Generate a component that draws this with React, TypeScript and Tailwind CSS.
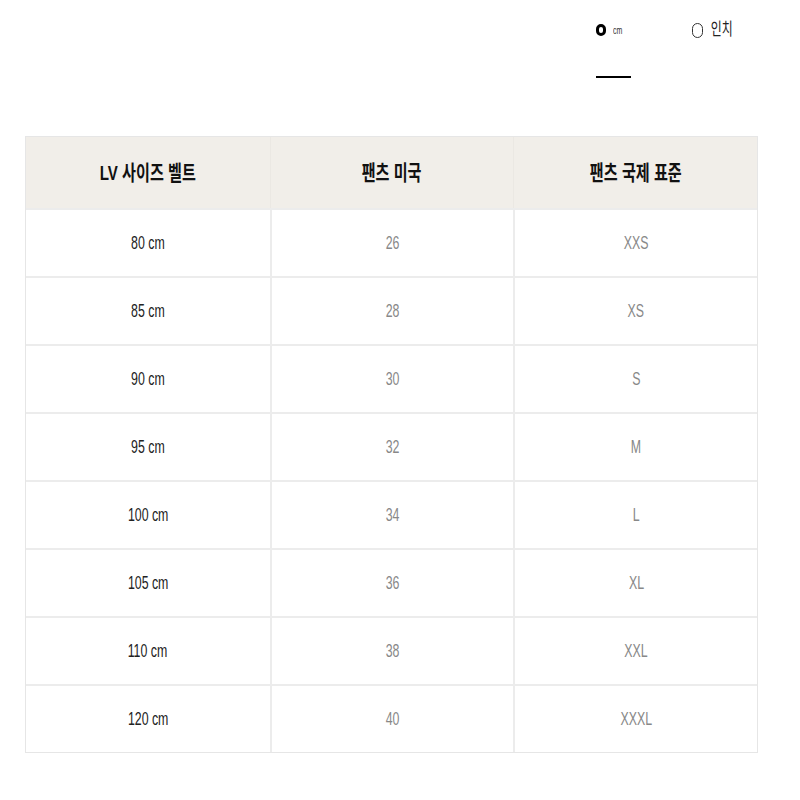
import React from 'react';

const rows = [
  ['80 cm', '26', 'XXS'],
  ['85 cm', '28', 'XS'],
  ['90 cm', '30', 'S'],
  ['95 cm', '32', 'M'],
  ['100 cm', '34', 'L'],
  ['105 cm', '36', 'XL'],
  ['110 cm', '38', 'XXL'],
  ['120 cm', '40', 'XXXL'],
];

const font = { fontFamily: '"Liberation Sans", "Noto Sans CJK KR", sans-serif' };

const Narrow: React.FC<{ children: React.ReactNode; className?: string }> = ({ children, className = '' }) => (
  <span className={`inline-block whitespace-nowrap ${className}`}>{children}</span>
);

export default function App() {
  return (
    <div className="w-[800px] h-[800px] bg-white" style={font}>
      <div className="flex pl-[596px] pt-[20px]">
        <div className="flex flex-col w-[96px]">
          <div className="flex items-center gap-[6px] h-[20px]">
            <span className="w-[10px] h-[12px] rounded-full border-[3px] border-black"></span>
            <Narrow className="scale-x-[0.7] text-[10px] text-[#333] -ml-[1px]">cm</Narrow>
          </div>
          <div className="mt-[36px] w-[35px] h-[2px] bg-black"></div>
        </div>
        <div className="flex items-center gap-[6px] h-[20px]">
          <span className="w-[11px] h-[15px] rounded-full border-[1.5px] border-[#333]"></span>
          <Narrow className="scale-x-[0.7] text-[17px] text-[#222] -ml-[3px]">인치</Narrow>
        </div>
      </div>

      <div className="mt-[58px] ml-[25px] w-[733px] border border-[#e6e6e6]">
        <div className="grid grid-cols-3 h-[71px] bg-[#f1eee9]">
          {['LV 사이즈 벨트', '팬츠 미국', '팬츠 국제 표준'].map((h, i) => (
            <div
              key={h}
              className={`flex items-center justify-center ${i > 0 ? 'border-l border-[#ebe8e3]' : ''}`}
            >
              <Narrow className="scale-x-[0.72] text-[21px] text-[#111] font-bold">{h}</Narrow>
            </div>
          ))}
        </div>
        {rows.map((r) => (
          <div key={r[0]} className="grid grid-cols-3 h-[68px] border-t-2 border-[#ececec]">
            <div className="flex items-center justify-center">
              <Narrow className="scale-x-[0.65] text-[19px] text-[#222]">{r[0]}</Narrow>
            </div>
            <div className="flex items-center justify-center border-l-2 border-[#ececec]">
              <Narrow className="scale-x-[0.65] text-[19px] text-[#888]">{r[1]}</Narrow>
            </div>
            <div className="flex items-center justify-center border-l-2 border-[#ececec]">
              <Narrow className="scale-x-[0.65] text-[19px] text-[#888]">{r[2]}</Narrow>
            </div>
          </div>
        ))}
      </div>
    </div>
  );
}
